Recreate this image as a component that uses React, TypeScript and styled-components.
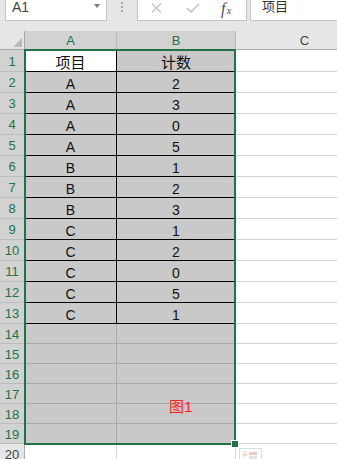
import React from 'react';
import styled, { createGlobalStyle } from 'styled-components';

const GREEN = '#217346';

const GlobalStyle = createGlobalStyle`
  html, body {
    margin: 0;
    padding: 0;
    background: #fff;
  }
  body {
    font-family: 'Liberation Sans', 'Noto Sans CJK SC', sans-serif;
  }
`;

const Page = styled.div`
  width: 337px;
  height: 459px;
  overflow: hidden;
  background: #fff;
  font-family: 'Liberation Sans', 'Noto Sans CJK SC', sans-serif;
`;

/* formula bar */

const Toolbar = styled.div`
  display: flex;
  align-items: flex-start;
  height: 31px;
  background: #e6e6e6;
`;

const Box = styled.div`
  box-sizing: border-box;
  height: 21px;
  background: #fff;
  border: 1px solid #c6c6c6;
  border-top: none;
`;

const NameBox = styled(Box)`
  width: 102px;
  margin-left: 5px;
  display: flex;
  justify-content: space-between;
  padding: 0 6px;
  font-size: 14px;
  line-height: 14px;
  color: #444;
`;

const Caret = styled.span`
  margin-top: 4px;
  width: 0;
  height: 0;
  border-left: 3.5px solid transparent;
  border-right: 3.5px solid transparent;
  border-top: 4px solid #7a7a7a;
`;

const Grip = styled.div`
  display: flex;
  flex-direction: column;
  gap: 2px;
  margin: 2px 14px 0;

  span {
    width: 2px;
    height: 2px;
    background: #a8a8a8;
  }
`;

const Buttons = styled(Box)`
  width: 110px;
  display: flex;
  align-items: flex-start;
  padding: 3px 0 0 13px;
`;

const Fx = styled.span`
  margin-left: 21px;
  margin-top: -2px;
  font-family: 'Liberation Serif', serif;
  font-style: italic;
  color: #505050;
  font-size: 16px;
  line-height: 15px;

  small {
    font-size: 11px;
    margin-left: 1px;
  }
`;

const FormulaInput = styled(Box)`
  flex: 1;
  margin-left: 3px;
  margin-right: -2px;
  padding-left: 11px;
  font-size: 13px;
  line-height: 13px;
  color: #333;
`;

/* sheet */

const Sheet = styled.div`
  position: relative;
  display: grid;
  grid-template-columns: 25px 92px 119px 138px;
  grid-template-rows: 19px 22px repeat(12, 21px) repeat(6, 20px) 20px;
`;

const Corner = styled.div`
  box-sizing: border-box;
  display: flex;
  align-items: flex-end;
  justify-content: flex-end;
  padding: 0 2px 2px 0;
  background: #e6e6e6;
  border-right: 1px solid #ababab;
  border-bottom: 1px solid #ababab;

  span {
    width: 0;
    height: 0;
    border-left: 9px solid transparent;
    border-bottom: 9px solid #b9b9b9;
  }
`;

const ColHeader = styled.div<{ $selected?: boolean }>`
  box-sizing: border-box;
  display: flex;
  align-items: center;
  justify-content: center;
  font-size: 13px;
  background: ${(p) => (p.$selected ? '#d2d2d2' : '#e6e6e6')};
  color: ${(p) => (p.$selected ? GREEN : '#444')};
  border-right: 1px solid ${(p) => (p.$selected ? '#bababa' : '#ababab')};
  border-bottom: 1px solid #ababab;
`;

const RowHeader = styled.div<{ $selected?: boolean }>`
  box-sizing: border-box;
  display: flex;
  align-items: center;
  justify-content: center;
  padding-top: 1px;
  font-size: 13px;
  background: ${(p) => (p.$selected ? '#d2d2d2' : '#e6e6e6')};
  color: ${(p) => (p.$selected ? GREEN : '#444')};
  border-right: 1px solid #ababab;
  border-bottom: 1px solid ${(p) => (p.$selected ? '#bcbcbc' : '#c8c8c8')};
`;

const lineColors = {
  black: '#000',
  dark: '#a9a9a9',
  light: '#d4d4d4',
};

const Cell = styled.div<{ $fill: 'white' | 'gray'; $line: keyof typeof lineColors; $cjk?: boolean }>`
  box-sizing: border-box;
  display: flex;
  align-items: flex-end;
  justify-content: center;
  font-size: ${(p) => (p.$cjk ? '15px' : '14px')};
  line-height: 16px;
  color: #111;
  background: ${(p) => (p.$fill === 'gray' ? '#c9c9c9' : '#fff')};
  border-right: 1px solid ${(p) => lineColors[p.$line]};
  border-bottom: 1px solid ${(p) => lineColors[p.$line]};
`;

const Selection = styled.div`
  position: absolute;
  left: 24px;
  top: 18px;
  width: 212px;
  height: 396px;
  box-sizing: border-box;
  border: 2px solid ${GREEN};
  pointer-events: none;
`;

const FillHandle = styled.div`
  position: absolute;
  left: 231px;
  top: 409px;
  width: 8px;
  height: 8px;
  box-sizing: border-box;
  background: ${GREEN};
  border: 1px solid #fff;
`;

const Caption = styled.span`
  position: absolute;
  left: 169px;
  top: 368px;
  font-size: 15px;
  line-height: 15px;
  color: #ff1f1f;
`;

const QuickAnalysis = styled.div`
  position: absolute;
  left: 238px;
  top: 416px;
  width: 26px;
  height: 14px;
`;

const data: [string, string][] = [
  ['项目', '计数'],
  ['A', '2'],
  ['A', '3'],
  ['A', '0'],
  ['A', '5'],
  ['B', '1'],
  ['B', '2'],
  ['B', '3'],
  ['C', '1'],
  ['C', '2'],
  ['C', '0'],
  ['C', '5'],
  ['C', '1'],
];

const rows = Array.from({ length: 20 }, (_, i) => i + 1);

const App = () => {
  return (
    <Page>
      <GlobalStyle />
      <Toolbar>
        <NameBox>
          <span>A1</span>
          <Caret />
        </NameBox>
        <Grip>
          <span />
          <span />
          <span />
        </Grip>
        <Buttons>
          <svg width='11' height='10' viewBox='0 0 11 10'>
            <path d='M1 0.5 L10 9.5 M10 0.5 L1 9.5' stroke='#c4c4c4' strokeWidth='1.3' fill='none' />
          </svg>
          <svg width='14' height='10' viewBox='0 0 14 10' style={{ marginLeft: 24 }}>
            <path d='M1 5 L5 9 L13 1' stroke='#c4c4c4' strokeWidth='1.6' fill='none' />
          </svg>
          <Fx>
            f<small>x</small>
          </Fx>
        </Buttons>
        <FormulaInput>项目</FormulaInput>
      </Toolbar>

      <Sheet>
        <Corner>
          <span />
        </Corner>
        <ColHeader $selected>A</ColHeader>
        <ColHeader $selected>B</ColHeader>
        <ColHeader>C</ColHeader>

        {rows.map((r) => {
          const values = data[r - 1];
          const inTable = r <= 13;
          const selected = r <= 19;
          const line = inTable ? 'black' : selected ? 'dark' : 'light';
          return (
            <React.Fragment key={r}>
              <RowHeader $selected={selected}>{r}</RowHeader>
              <Cell $fill={r === 1 || !selected ? 'white' : 'gray'} $line={line} $cjk={r === 1}>
                {values?.[0]}
              </Cell>
              <Cell $fill={selected ? 'gray' : 'white'} $line={line} $cjk={r === 1}>
                {values?.[1]}
              </Cell>
              <Cell $fill='white' $line='light' />
            </React.Fragment>
          );
        })}

        <Selection />
        <FillHandle />
        <Caption>图1</Caption>
        <QuickAnalysis>
          <svg width='26' height='14' viewBox='0 0 26 14'>
            <rect x='1.5' y='1.5' width='22' height='14' fill='#fff' stroke='#d3e2d9' />
            <path d='M7 4 L4 9 L7 9 L5 13 L10 7 L7 7 L9 4 Z' fill='#f6d6c4' />
            <rect x='11' y='5' width='8' height='3' fill='#f2c9c9' />
            <rect x='11' y='9' width='8' height='3' fill='#e3e3e3' />
          </svg>
        </QuickAnalysis>
      </Sheet>
    </Page>
  );
};

export default App;
